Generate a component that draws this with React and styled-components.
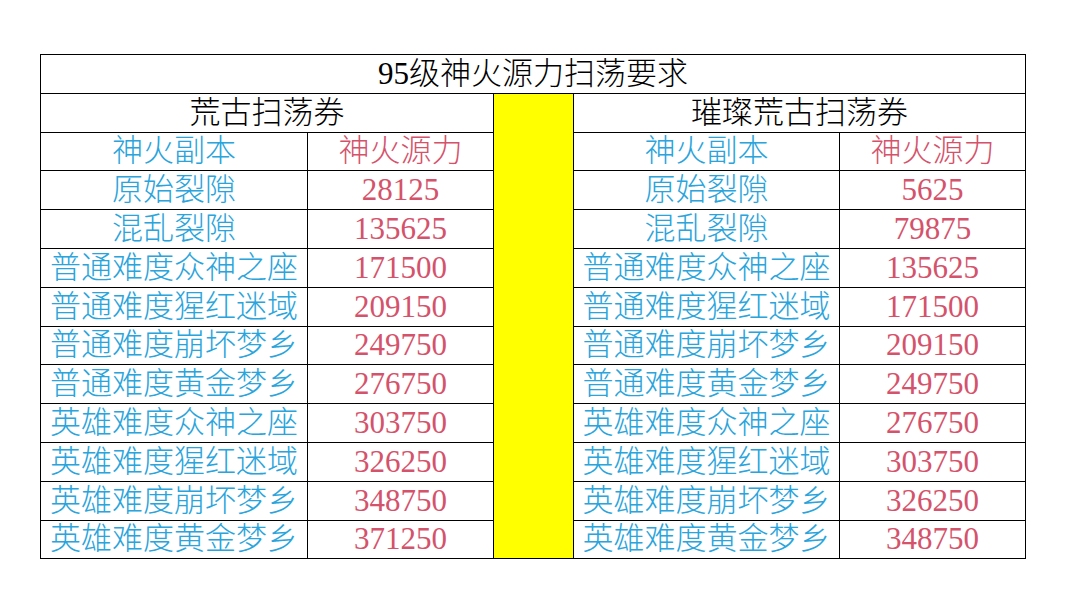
import React from 'react'
import styled, { createGlobalStyle } from 'styled-components'

const GlobalStyle = createGlobalStyle`
    html, body {
        margin: 0;
        padding: 0;
        background: #ffffff;
    }
`

const Page = styled.div`
    padding: 54px 0 0 40px;
    font-family: "Liberation Serif", "Noto Sans CJK SC", serif;
`

const Table = styled.table`
    border-collapse: collapse;
    table-layout: fixed;
    width: 985px;
`

const Row = styled.tr`
    height: 38.8px;
`

const Cell = styled.td`
    border: 1px solid #000000;
    padding: 0;
    height: 38.8px;
    box-sizing: border-box;
    text-align: center;
    vertical-align: middle;
    white-space: nowrap;
    font-size: 31px;
    font-weight: 300;
    line-height: 36px;
    color: ${(p) => (p.tone === 'blue' ? '#29a4dc' : p.tone === 'red' ? '#d5526b' : '#000000')};
`

const Spacer = styled.td`
    border: 1px solid #000000;
    background: #ffff00;
    padding: 0;
`

const rows = [
    ['原始裂隙', '28125', '原始裂隙', '5625'],
    ['混乱裂隙', '135625', '混乱裂隙', '79875'],
    ['普通难度众神之座', '171500', '普通难度众神之座', '135625'],
    ['普通难度猩红迷域', '209150', '普通难度猩红迷域', '171500'],
    ['普通难度崩坏梦乡', '249750', '普通难度崩坏梦乡', '209150'],
    ['普通难度黄金梦乡', '276750', '普通难度黄金梦乡', '249750'],
    ['英雄难度众神之座', '303750', '英雄难度众神之座', '276750'],
    ['英雄难度猩红迷域', '326250', '英雄难度猩红迷域', '303750'],
    ['英雄难度崩坏梦乡', '348750', '英雄难度崩坏梦乡', '326250'],
    ['英雄难度黄金梦乡', '371250', '英雄难度黄金梦乡', '348750'],
]

export default function App() {
    return (
        <Page>
            <GlobalStyle />
            <Table>
                <colgroup>
                    <col style={{ width: 267 }} />
                    <col style={{ width: 186 }} />
                    <col style={{ width: 80 }} />
                    <col style={{ width: 266 }} />
                    <col style={{ width: 186 }} />
                </colgroup>
                <tbody>
                    <Row>
                        <Cell colSpan={5}>95级神火源力扫荡要求</Cell>
                    </Row>
                    <Row>
                        <Cell colSpan={2}>荒古扫荡券</Cell>
                        <Spacer rowSpan={12} />
                        <Cell colSpan={2}>璀璨荒古扫荡券</Cell>
                    </Row>
                    <Row>
                        <Cell tone="blue">神火副本</Cell>
                        <Cell tone="red">神火源力</Cell>
                        <Cell tone="blue">神火副本</Cell>
                        <Cell tone="red">神火源力</Cell>
                    </Row>
                    {rows.map((r, i) => (
                        <Row key={i}>
                            <Cell tone="blue">{r[0]}</Cell>
                            <Cell tone="red">{r[1]}</Cell>
                            <Cell tone="blue">{r[2]}</Cell>
                            <Cell tone="red">{r[3]}</Cell>
                        </Row>
                    ))}
                </tbody>
            </Table>
        </Page>
    )
}
